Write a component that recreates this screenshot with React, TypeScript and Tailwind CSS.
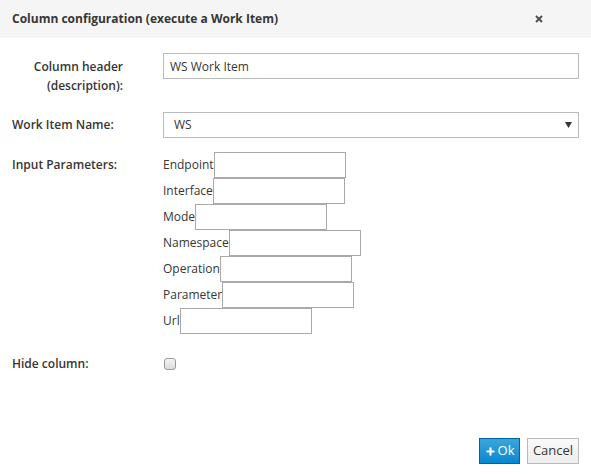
import { Plus } from 'lucide-react'

const params = [
  ['Endpoint', 'w-[132px]'],
  ['Interface', 'w-[132px]'],
  ['Mode', 'w-[132px]'],
  ['Namespace', 'w-[132px]'],
  ['Operation', 'w-[132px]'],
  ['Parameter', 'w-[132px]'],
  ['Url', 'w-[132px]'],
]

export default function App() {
  return (
    <div className="h-[474px] w-[591px] bg-white text-[12px] text-[#363636] [font-family:'Open_Sans',sans-serif]">
      {/* header */}
      <div className="flex h-[38px] items-center justify-between bg-[#f5f5f5] pl-3 pr-[48px]">
        <h4 className="text-[12px] font-bold leading-none">Column configuration (execute a Work Item)</h4>
        <svg width="8" height="8" viewBox="0 0 8 8" className="text-[#4d5258]">
          <path d="M1 1 L7 7 M7 1 L1 7" stroke="currentColor" strokeWidth="2" />
        </svg>
      </div>

      <div className="px-3 pt-[15px]">
        <div className="flex">
          <div className="w-[151px] shrink-0 pr-[40px] pt-[4px] text-right font-semibold leading-[19px]">
            Column header
            <br />
            (description):
          </div>
          <input
            readOnly
            value="WS Work Item"
            className="h-[26px] w-[416px] border border-[#bbb] px-[6px] text-[12px] text-[#363636] outline-none"
          />
        </div>

        <div className="mt-[17px] flex items-center">
          <div className="w-[151px] shrink-0 font-semibold">Work Item Name:</div>
          <div className="flex h-[26px] w-[416px] items-center justify-between border border-[#bbb] pl-[10px] pr-[6px]">
            <span>WS</span>
            <svg width="7" height="6" viewBox="0 0 7 6">
              <path d="M0 0 H7 L3.5 6 Z" fill="#363636" />
            </svg>
          </div>
        </div>

        <div className="mt-[14px] flex">
          <div className="w-[151px] shrink-0 pt-[4px] font-semibold">Input Parameters:</div>
          <div className="flex flex-col">
            {params.map(([name, w]) => (
              <div key={name} className="flex h-[26px] items-center">
                <span>{name}</span>
                <input readOnly className={`h-[26px] ${w} border border-[#a9a9a9] outline-none`} />
              </div>
            ))}
          </div>
        </div>

        <div className="mt-[21px] flex items-center">
          <div className="w-[152px] shrink-0 font-semibold">Hide column:</div>
          <span className="block h-[12px] w-[12px] rounded-[3px] border border-[#9a9a9a] bg-gradient-to-b from-[#f4f4f4] to-[#dcdcdc]" />
        </div>

        <div className="mt-[65px] flex justify-end gap-[7px]">
          <button className="flex h-[26px] w-[41px] items-center justify-center gap-[2px] border border-[#00659c] bg-gradient-to-b from-[#39a5dc] to-[#0088ce] text-[12px] text-white">
            <Plus size={11} strokeWidth={4.5} />
            <span className="text-[13px]">Ok</span>
          </button>
          <button className="h-[26px] w-[52px] border border-[#bbb] bg-gradient-to-b from-[#fafafa] to-[#ededed] text-[13px] text-[#363636]">
            Cancel
          </button>
        </div>
      </div>
    </div>
  )
}
